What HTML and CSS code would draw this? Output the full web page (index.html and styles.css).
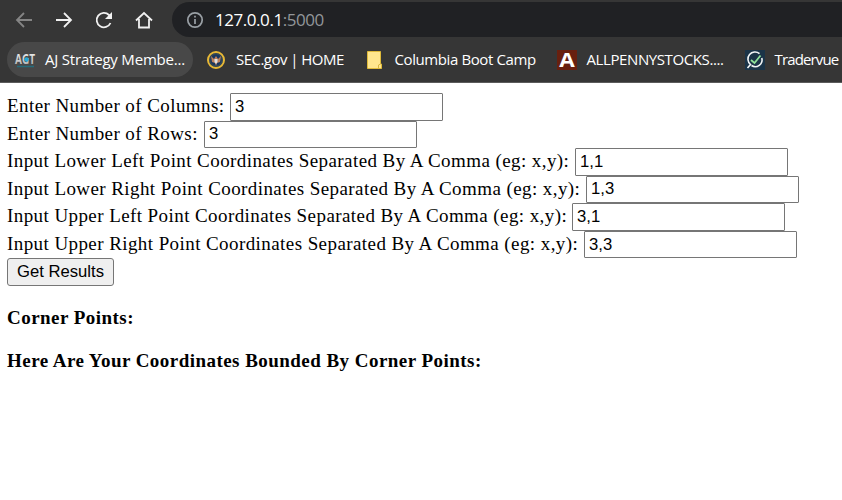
FILE: index.html
```html
<!DOCTYPE html>
<html lang="en">
<head>
<meta charset="utf-8">
<title>Coordinates</title>
<link rel="stylesheet" href="styles.css">
</head>
<body>
<header class="browser">
  <div class="toolbar">
    <svg class="nav" viewBox="0 0 20 20"><path class="dim" d="M18 10H3M10 3L3 10l7 7"/></svg>
    <svg class="nav" viewBox="0 0 20 20"><path d="M2 10h15M10 3l7 7-7 7"/></svg>
    <svg class="nav" viewBox="0 0 20 20"><path d="M16.500 13A7.200 7.200 0 1 1 15 5l2 2"/><path class="fill" d="M18 2v7h-7z"/></svg>
    <svg class="nav" viewBox="0 0 20 20"><path d="M2 10.500L10 3l8 7.500M5 9v8.500h10V9"/></svg>
    <div class="address">
      <svg class="info" viewBox="0 0 18 18"><circle cx="9" cy="9" r="7.200"/><path d="M9 8v5M9 4.800v1.800"/></svg>
      <span class="url">127.0.0.1<span class="port">:5000</span></span>
    </div>
  </div>
  <nav class="bookmarks">
    <a class="bookmark active"><svg class="act" viewBox="0 0 20 20"><defs><linearGradient id="silver" x2="0" y2="1"><stop offset="0" stop-color="#fff"/><stop offset="1" stop-color="#aaa"/></linearGradient></defs><text x="0" y="14" textLength="20" lengthAdjust="spacingAndGlyphs" fill="url(#silver)">AGT</text><circle cx="11.500" cy="9.500" r="2.300" fill="#25a8d8"/><path d="M2 16.500h17" stroke="#246c7c" stroke-width="1.500"/></svg><span class="t1">AJ Strategy Membe...</span></a>
    <a class="bookmark sec"><svg viewBox="0 0 20 20"><circle cx="10" cy="10" r="8" fill="#183760" stroke="#e9b935" stroke-width="2"/><circle cx="10" cy="10" r="6.200" fill="none" stroke="#63623f" stroke-width=".6"/><path d="M5 6l3 3 2-3 2 3 3-3-1 6-3 1-1 3-1-3-3-1z" fill="#bd805b"/><path d="M8.500 9h3v3L10 14l-1.500-2z" fill="#dce1e5"/></svg><span class="t2">SEC.gov | HOME</span></a>
    <a class="bookmark folder"><svg viewBox="0 0 20 20"><path d="M2.500 1.500h13V14h1v4.500h-14z" fill="#ffe68e" stroke="#dfba3a"/><path d="M13.500 18v-3l2-1" fill="none" stroke="#d8b640"/></svg><span class="t3">Columbia Boot Camp</span></a>
    <a class="bookmark penny"><svg viewBox="0 0 20 20"><path d="M0 0h20v20H0z" fill="#68200f"/><text x="2.300" y="17" textLength="15.500" lengthAdjust="spacingAndGlyphs" fill="#fff">A</text></svg><span class="t4">ALLPENNYSTOCKS....</span></a>
    <a class="bookmark trader"><svg viewBox="0 0 20 20"><path d="M0 0h20v20H0z" fill="#1b3448"/><path d="M2.500 18l3-3.500A6.800 6.800 0 0 1 14.500 3.600M16.800 8A6.800 6.800 0 0 1 6.500 15.500" fill="none" stroke="#f2f5f6" stroke-width="1.600"/><path d="M6 10l3.500 3L15.500 5.500" fill="none" stroke="#8fe29a" stroke-width="1.800"/></svg><span class="t5">Tradervue</span></a>
  </nav>
</header>
<main>
  <form>
    <div class="row"><label class="w1" for="cols">Enter Number of Columns:</label><input id="cols" value="3"></div>
    <div class="row"><label class="w2" for="rows">Enter Number of Rows:</label><input id="rows" value="3"></div>
    <div class="row"><label class="w3" for="ll">Input Lower Left Point Coordinates Separated By A Comma (eg: x,y):</label><input id="ll" value="1,1"></div>
    <div class="row"><label class="w4" for="lr">Input Lower Right Point Coordinates Separated By A Comma (eg: x,y):</label><input id="lr" value="1,3"></div>
    <div class="row"><label class="w5" for="ul">Input Upper Left Point Coordinates Separated By A Comma (eg: x,y):</label><input id="ul" value="3,1"></div>
    <div class="row"><label class="w6" for="ur">Input Upper Right Point Coordinates Separated By A Comma (eg: x,y):</label><input id="ur" value="3,3"></div>
    <button type="button">Get Results</button>
  </form>
  <h4>Corner Points:</h4>
  <h4>Here Are Your Coordinates Bounded By Corner Points:</h4>
</main>
</body>
</html>
```
FILE: styles.css
```css
* { box-sizing: border-box; }
body { margin: 0; background: #fff; color: #000; font: 19px "Liberation Serif", serif; overflow: hidden; }
.browser { height: 83px; background: #363636; border-bottom: 1px solid #5b5b5b; font-family: "Open Sans", sans-serif; color: #fff; }
.toolbar { height: 39px; display: flex; align-items: center; padding-left: 14px; gap: 20px; }
.nav { width: 20px; height: 20px; flex: none; fill: none; stroke: #f1f1f1; stroke-width: 1.8; }
.nav .dim { stroke: #858585; }
.nav .fill { fill: #f1f1f1; stroke: none; }
.address { flex: 1; height: 35px; margin-left: -2px; padding-left: 14px; background: #202124; border-radius: 18px 0 0 18px; display: flex; align-items: center; }
.info { width: 18px; height: 18px; fill: none; stroke: #9aa0a6; stroke-width: 1.7; }
.url { margin-left: 11px; font-size: 17px; letter-spacing: -.45px; }
.port { color: #92969a; }
.bookmarks { height: 43px; padding: 3px 0 5px 7px; display: flex; white-space: nowrap; }
.bookmark { height: 35px; display: flex; align-items: center; flex: none; font-size: 15px; }
.bookmark svg { width: 20px; height: 20px; flex: none; margin-right: 10px; overflow: visible; }
.bookmark span { margin-top: -1px; }
.bookmark text { font: bold 19px "Open Sans", sans-serif; }
.bookmark .act text { font-size: 15px; }
.t1 { letter-spacing: -.2px; }
.t2 { letter-spacing: -.53px; }
.t3 { letter-spacing: -.4px; }
.t4 { letter-spacing: -.4px; }
.t5 { letter-spacing: -.85px; }
.active { width: 186px; padding-left: 8px; border-radius: 18px; background: #484848; }
.sec { margin-left: 13px; width: 158.5px; }
.folder { width: 192px; }
.penny { width: 188px; }
main { padding: 10px 7px; }
.row { display: flex; height: 27.58px; align-items: flex-start; white-space: nowrap; }
label { flex: none; line-height: 24px; padding-top: 1px; letter-spacing: .42px; }
.w1 { width: 223px; }
.w2 { width: 197px; }
.w3 { width: 568px; }
.w4 { width: 579px; }
.w5 { width: 565px; }
.w6 { width: 577px; }
input { width: 213px; height: 27.5px; flex: none; margin: 0; padding: 1px 4px; border: 1px solid #767676; border-radius: 1px; background: #fff; color: #000; font: 16.67px "Liberation Sans", sans-serif; }
button { display: block; width: 107px; height: 28px; margin: 0; padding: 0; border: 1px solid #767676; border-radius: 3px; background: #efefef; color: #000; font: 16.67px "Liberation Sans", sans-serif; }
h4 { margin: 20px 0; font-size: 19px; line-height: 23px; letter-spacing: .46px; }
```
